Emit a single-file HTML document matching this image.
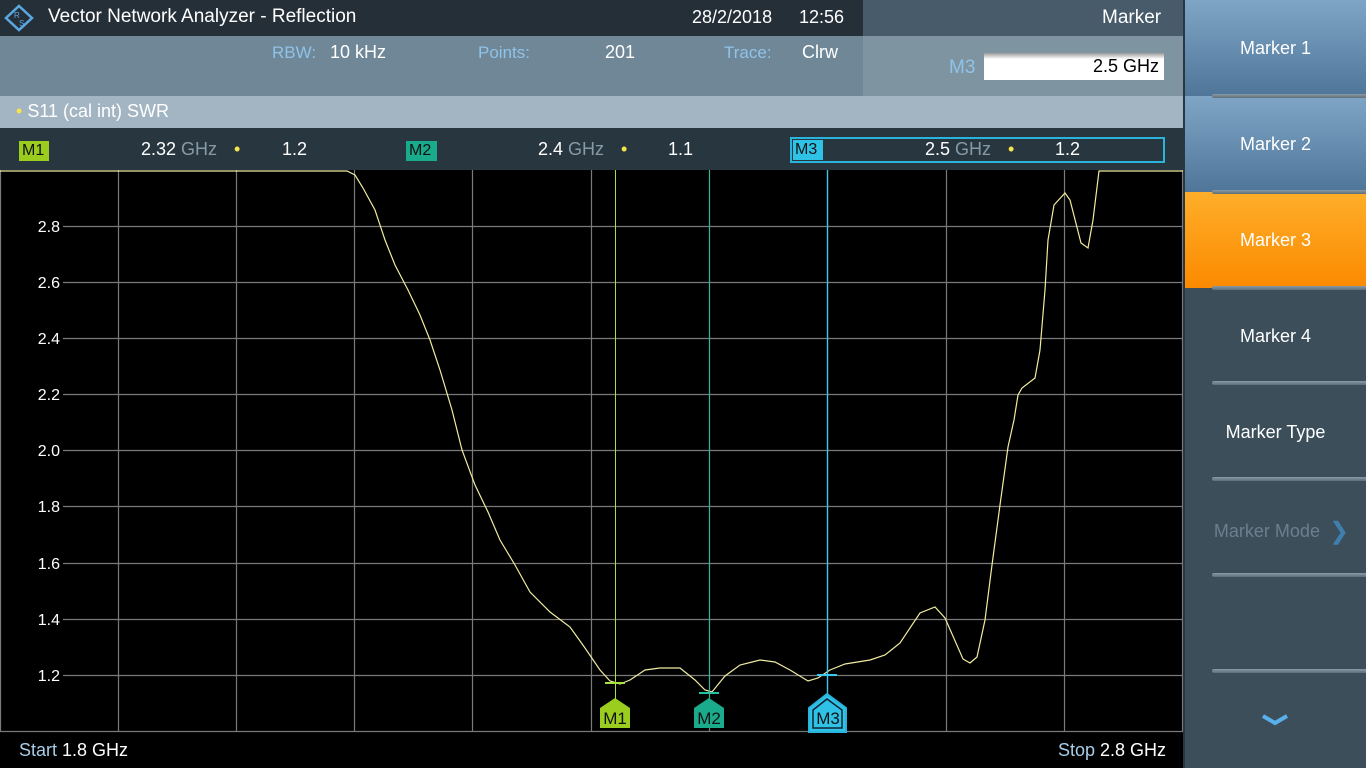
<!DOCTYPE html>
<html><head><meta charset="utf-8"><style>
*{margin:0;padding:0;box-sizing:border-box}
body{width:1366px;height:768px;overflow:hidden;background:#000;font-family:"Liberation Sans",sans-serif;position:relative;color:#fff}
.a{position:absolute;white-space:nowrap}
.lb{color:#8fc3ea}
.btn{position:absolute;left:1185px;width:181px;height:96px;font-size:18px;text-align:center;color:#fff}
.div{position:absolute;left:1212px;width:154px;height:4px;background:linear-gradient(#8a9aa5,#5d6e79);border-radius:2px 0 0 2px}
</style></head><body>
<div class="a" style="left:0;top:0;width:863px;height:36px;background:#252f38"></div>
<div class="a" style="left:863px;top:0;width:320px;height:36px;background:#475b6a"></div>
<div class="a" style="left:0;top:36px;width:863px;height:60px;background:#6f8796"></div>
<div class="a" style="left:863px;top:36px;width:320px;height:60px;background:#7e94a1"></div>
<div class="a" style="left:0;top:96px;width:1183px;height:32px;background:#a3b5c2"></div>
<div class="a" style="left:0;top:128px;width:1183px;height:42px;background:#283640"></div>
<svg class="a" style="left:4px;top:4px" width="30" height="28" viewBox="0 0 30 28"><path d="M15 2 L28 14 L15 26 L2 14 Z" fill="none" stroke="#5aa8e0" stroke-width="2.5"/><text x="10" y="14" font-size="8" fill="#5aa8e0" font-family="Liberation Sans">R</text><text x="15" y="22" font-size="8" fill="#5aa8e0" font-family="Liberation Sans">S</text></svg>
<div class="a" style="left:48px;top:6px;font-size:19px">Vector Network Analyzer - Reflection</div>
<div class="a" style="left:692px;top:7px;font-size:18px">28/2/2018</div>
<div class="a" style="left:799px;top:7px;font-size:18px">12:56</div>
<div class="a" style="left:1102px;top:7px;font-size:19px">Marker</div>
<div class="a lb" style="left:272px;top:43px;font-size:17px">RBW:</div>
<div class="a" style="left:330px;top:42px;font-size:18px">10 kHz</div>
<div class="a lb" style="left:478px;top:43px;font-size:17px">Points:</div>
<div class="a" style="left:605px;top:42px;font-size:18px">201</div>
<div class="a lb" style="left:724px;top:43px;font-size:17px">Trace:</div>
<div class="a" style="left:802px;top:42px;font-size:18px">Clrw</div>
<div class="a lb" style="left:949px;top:57px;font-size:19px">M3</div>
<div class="a" style="left:984px;top:53px;width:180px;height:27px;background:linear-gradient(#9a9a9a,#fff 6px);color:#000;font-size:18px;text-align:right;padding:3px 5px 0 0">2.5 GHz</div>
<div class="a" style="left:16px;top:101px;font-size:18px;color:#fff"><span style="color:#f5e44a">•</span> S11 (cal int) SWR</div>
<div class="a" style="left:19px;top:141px;width:30px;height:20px;background:#9acd1e;color:#111;font-size:16px;padding:1px 0 0 3px">M1</div>
<div class="a" style="left:141px;top:139px;font-size:18px">2.32 <span style="color:#8899a6">GHz</span></div>
<div class="a" style="left:234px;top:139px;font-size:18px;color:#f5e44a">•</div>
<div class="a" style="left:282px;top:139px;font-size:18px">1.2</div>
<div class="a" style="left:406px;top:141px;width:31px;height:20px;background:#1aaa8c;color:#111;font-size:16px;padding:1px 0 0 3px">M2</div>
<div class="a" style="left:538px;top:139px;font-size:18px">2.4 <span style="color:#8899a6">GHz</span></div>
<div class="a" style="left:621px;top:139px;font-size:18px;color:#f5e44a">•</div>
<div class="a" style="left:668px;top:139px;font-size:18px">1.1</div>
<div class="a" style="left:790px;top:137px;width:375px;height:26px;border:2px solid #2ab4dc"></div>
<div class="a" style="left:793px;top:140px;width:30px;height:20px;background:#2ec3e6;color:#111;font-size:16px;padding:1px 0 0 2px">M3</div>
<div class="a" style="left:925px;top:139px;font-size:18px">2.5 <span style="color:#8899a6">GHz</span></div>
<div class="a" style="left:1008px;top:139px;font-size:18px;color:#f5e44a">•</div>
<div class="a" style="left:1055px;top:139px;font-size:18px">1.2</div>
<svg class="a" style="left:0;top:170px" width="1183" height="598" viewBox="0 170 1183 598">
<g stroke="#7a7a7a" stroke-width="1.2" fill="none">
<path d="M118.5 170V731M236.5 170V731M354.5 170V731M472.5 170V731M591.5 170V731M709.5 170V731M827.5 170V731M946.5 170V731M1064.5 170V731M1182.5 170V731M0.5 170V731"/>
<path d="M63 226.5H1183M63 282.5H1183M63 338.5H1183M63 394.5H1183M63 450.5H1183M63 506.5H1183M63 563.5H1183M63 619.5H1183M63 675.5H1183M0 731.5H1183"/>
</g>
<g fill="#fff" font-size="16" font-family="Liberation Sans" text-anchor="end">
<text x="60" y="232">2.8</text><text x="60" y="288">2.6</text><text x="60" y="344">2.4</text><text x="60" y="400">2.2</text><text x="60" y="456">2.0</text><text x="60" y="512">1.8</text><text x="60" y="569">1.6</text><text x="60" y="625">1.4</text><text x="60" y="681">1.2</text>
</g>
<path d="M0 171 L347 171 L355 175 L363 188 L375 210 L385 240 L395 265 L408 290 L420 315 L430 340 L440 370 L452 410 L462 450 L475 485 L488 512 L500 540 L515 565 L530 592 L550 612 L570 627 L585 648 L600 670 L610 681 L620 684 L630 680 L645 670 L660 668 L680 668 L695 680 L705 690 L712 692 L725 676 L740 665 L760 660 L775 662 L790 670 L808 681 L818 678 L830 670 L845 664 L870 660 L885 655 L900 643 L920 613 L935 607 L945 618 L963 659 L970 663 L977 657 L985 620 L992 565 L1000 505 L1008 447 L1014 420 L1018 395 L1022 388 L1035 378 L1040 350 L1045 290 L1048 240 L1054 205 L1065 193 L1070 200 L1081 243 L1088 248 L1093 220 L1099 171 L1183 171" fill="none" stroke="#f0eca0" stroke-width="1.2"/>
<path d="M615.5 170V700" stroke="#a8e040" stroke-width="1"/>
<path d="M709.5 170V700" stroke="#22c0a0" stroke-width="1"/>
<path d="M827.5 170V700" stroke="#3ac8ee" stroke-width="1.3"/>
<path d="M605 683H625" stroke="#a8e040" stroke-width="2"/>
<path d="M699 693H719" stroke="#22c0a0" stroke-width="2"/>
<path d="M817 675H837" stroke="#3ac8ee" stroke-width="2"/>
<path d="M600 708 L615 698 L630 708 V728 H600Z" fill="#9acd1e"/>
<path d="M694 708 L709 698 L724 708 V728 H694Z" fill="#1aaa8c"/>
<path d="M809 708 L827 694 L846 708 V732 H809Z" fill="#2ec3e6" stroke="#2ab4dc" stroke-width="2"/>
<path d="M813 710 L827 699 L842 710 V728 H813Z" fill="none" stroke="#123" stroke-width="1.5"/>
<g fill="#111" font-size="17" font-family="Liberation Sans" text-anchor="middle">
<text x="615" y="724">M1</text><text x="709" y="724">M2</text><text x="828" y="724">M3</text></g>
</svg>
<div class="a" style="left:19px;top:740px;font-size:18px"><span style="color:#a8cde8">Start</span> 1.8 GHz</div>
<div class="a" style="left:1058px;top:740px;font-size:18px"><span style="color:#a8cde8">Stop</span> 2.8 GHz</div>
<div class="a" style="left:1183px;top:0;width:183px;height:768px;background:#3b4e5a;border-left:2px solid #2a3740"></div>
<div class="btn" style="top:0;background:linear-gradient(#7fa5c6,#4f7699)"><div style="padding-top:38px">Marker 1</div></div>
<div class="btn" style="top:96px;background:linear-gradient(#7fa5c6,#4f7699)"><div style="padding-top:38px">Marker 2</div></div>
<div class="btn" style="top:192px;background:linear-gradient(#ffae2a,#fb8a00)"><div style="padding-top:38px">Marker 3</div></div>
<div class="btn" style="top:288px"><div style="padding-top:38px">Marker 4</div></div>
<div class="btn" style="top:384px"><div style="padding-top:38px">Marker Type</div></div>
<div class="btn" style="top:480px;color:#6b7f8c"><div style="padding-top:35px;padding-left:12px">Marker Mode <span style="color:#3f7fae;font-size:24px;position:relative;top:2px;margin-left:4px">❯</span></div></div>
<div class="div" style="top:94px"></div><div class="div" style="top:190px"></div><div class="div" style="top:286px"></div><div class="div" style="top:381px"></div><div class="div" style="top:477px"></div><div class="div" style="top:573px"></div><div class="div" style="top:669px"></div>
<svg class="a" style="left:1261px;top:713px" width="28" height="14"><path d="M2 3 L14 10 L26 3" fill="none" stroke="#5ab0ea" stroke-width="4"/></svg>
</body></html>
